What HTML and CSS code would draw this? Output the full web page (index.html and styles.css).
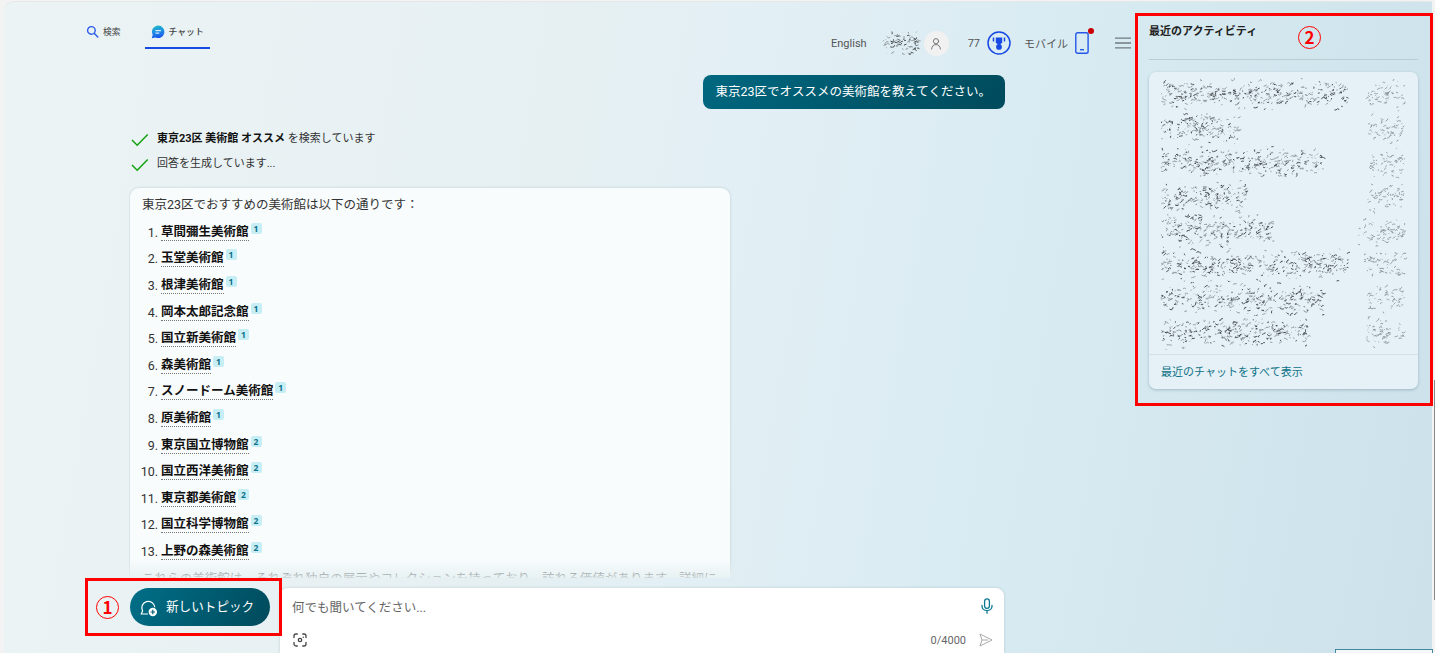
FILE: index.html
```
<!DOCTYPE html>
<html lang="ja">
<head>
    <meta charset="UTF-8">
    <meta name="viewport" content="width=device-width, initial-scale=1.0">
    <title>チャット</title>
    <link rel="stylesheet" href="styles.css">
</head>
<body>
    <div class="page">
        <div class="main">
            <header class="header">
                <nav class="tabs">
                    <a class="tab">
                        <svg width="13" height="13" viewBox="0 0 13 13" fill="none" stroke="#2a5be8" stroke-width="1.4" stroke-linecap="round"><circle cx="5.4" cy="5.4" r="3.8"/><path d="M8.4 8.4l3.4 3.6"/></svg>
                        検索
                    </a>
                    <a class="tab active">
                        <svg width="14" height="14" viewBox="0 0 14 14">
                            <defs><linearGradient id="bubble" x1="0.4" y1="0" x2="0.6" y2="1"><stop offset="0" stop-color="#22b8c6"/><stop offset="0.5" stop-color="#1b8be6"/><stop offset="1" stop-color="#1c4fee"/></linearGradient></defs>
                            <path d="M7.2.6a6.2 6.2 0 1 1-2.7 11.8L.8 13.2l.9-3.5A6.2 6.2 0 0 1 7.2.6z" fill="url(#bubble)"/>
                            <path d="M4.8 5.7h4.8M4.8 8.1h3.1" stroke="#fff" stroke-width="1" stroke-linecap="round"/>
                        </svg>
                        チャット
                    </a>
                </nav>
                <div class="tools">
                    <span class="lang">English</span>
                    <svg class="scribble user-name" width="43" height="24" data-spans="0-42" data-seed="5"></svg>
                    <span class="avatar">
                        <svg width="12" height="13" viewBox="0 0 12 13" fill="none" stroke="#777" stroke-width="1" stroke-linecap="round"><circle cx="6" cy="4.2" r="2.6"/><path d="M1.600 12c.2-2.800 1.900-4.400 4.400-4.400s4.200 1.600 4.400 4.400"/></svg>
                    </span>
                    <span class="points">77</span>
                    <svg class="medal" width="24" height="24" viewBox="0 0 24 24"><circle cx="12" cy="12" r="11" fill="none" stroke="#174ae4" stroke-width="1.5"/><path d="M8.800 6.400h6.400v5.100l-2 1.900h-2.400l-2-1.900z" fill="#174ae4"/><circle cx="12" cy="15.900" r="2.900" fill="#174ae4"/><path d="M6.500 6.600v3.800M17.500 6.600v3.800" stroke="#174ae4" stroke-width="1.500"/></svg>
                    <span class="mobile">モバイル</span>
                    <span class="phone">
                        <svg width="14" height="22" viewBox="0 0 14 22" fill="none" stroke="#2457ea" stroke-width="1.400"><rect x=".8" y=".8" width="12.300" height="20.400" rx="1.800"/><path d="M5 17.700h4"/></svg>
                        <i class="dot"></i>
                    </span>
                    <svg class="menu" width="16" height="12" viewBox="0 0 16 12" stroke="#707b80" stroke-width="1.300"><path d="M0 1.200h16M0 6h16M0 10.900h16"/></svg>
                </div>
            </header>

            <div class="chat">
                <div class="question">東京23区でオススメの美術館を教えてください。</div>
                <div class="status">
                    <svg width="18" height="14" viewBox="0 0 18 14" fill="none" stroke="#13a10e" stroke-width="1.500"><path d="M1 7l5.200 5.200L16.700 1.500"/></svg>
                    <span><b>東京23区 美術館 オススメ</b> を検索しています</span>
                </div>
                <div class="status">
                    <svg width="18" height="14" viewBox="0 0 18 14" fill="none" stroke="#13a10e" stroke-width="1.500"><path d="M1 7l5.200 5.200L16.700 1.500"/></svg>
                    <span>回答を生成しています...</span>
                </div>
                <div class="answer">
                    <p class="lead">東京23区でおすすめの美術館は以下の通りです：</p>
                    <ol>
                        <li><b>草間彌生美術館</b><sup>1</sup></li>
                        <li><b>玉堂美術館</b><sup>1</sup></li>
                        <li><b>根津美術館</b><sup>1</sup></li>
                        <li><b>岡本太郎記念館</b><sup>1</sup></li>
                        <li><b>国立新美術館</b><sup>1</sup></li>
                        <li><b>森美術館</b><sup>1</sup></li>
                        <li><b>スノードーム美術館</b><sup>1</sup></li>
                        <li><b>原美術館</b><sup>1</sup></li>
                        <li><b>東京国立博物館</b><sup>2</sup></li>
                        <li><b>国立西洋美術館</b><sup>2</sup></li>
                        <li><b>東京都美術館</b><sup>2</sup></li>
                        <li><b>国立科学博物館</b><sup>2</sup></li>
                        <li><b>上野の森美術館</b><sup>2</sup></li>
                    </ol>
                    <p class="more">これらの美術館は、それぞれ独自の展示やコレクションを持っており、訪れる価値があります。詳細に</p>
                </div>
            </div>

            <div class="compose">
                <button class="new-topic">
                    <svg width="18" height="18" viewBox="0 0 18 18"><path d="M8 15H1.200l1.400-3.100A6.500 6.500 0 1 1 14.800 8.200" fill="none" stroke="#fff" stroke-width="1.200" stroke-linejoin="round"/><circle cx="12.800" cy="13" r="4.200" fill="#fff"/><path d="M12.800 10.800v4.400M10.600 13h4.400" stroke="#005f74" stroke-width="1.200"/></svg>
                    新しいトピック
                </button>
                <div class="input-box">
                    <div class="input-row">
                        <span class="placeholder">何でも聞いてください...</span>
                        <svg width="12" height="16" viewBox="0 0 12 16" fill="none" stroke="#0c7a94" stroke-width="1.300" stroke-linecap="round"><rect x="3.600" y=".8" width="4.800" height="9.600" rx="2.400"/><path d="M1 7.500v.8a5 4.300 0 0 0 10 0v-.8M6 12.800v2.400"/></svg>
                    </div>
                    <div class="input-row bottom">
                        <svg width="14" height="14" viewBox="0 0 14 14" fill="none" stroke="#444" stroke-width="1.300" stroke-linecap="round"><path d="M1 4.500V3a2 2 0 0 1 2-2h1.300M9.700 1H11a2 2 0 0 1 2 2v1.500M13 9.500V11a2 2 0 0 1-2 2H9.700M4.300 13H3a2 2 0 0 1-2-2V9.500"/><circle cx="7" cy="7" r="1.700"/><path d="M10.300 4.200v.1"/></svg>
                        <span class="count">0/4000</span>
                        <svg width="14" height="14" viewBox="0 0 14 14" fill="none" stroke="#aaa" stroke-width="1" stroke-linejoin="round"><path d="M1 1l12 6L1 13l2-6zM3 7h6"/></svg>
                    </div>
                </div>
            </div>
        </div>

        <aside class="activity">
            <h2>最近のアクティビティ</h2>
            <div class="card">
                <div class="history">
                    <svg class="scribble" width="250" height="34" data-spans="0-192 204-249" data-seed="11"></svg>
                    <svg class="scribble" width="250" height="34" data-spans="0-85 207-249" data-seed="22"></svg>
                    <svg class="scribble" width="250" height="34" data-spans="0-168 206-249" data-seed="33"></svg>
                    <svg class="scribble" width="250" height="34" data-spans="0-91 207-249" data-seed="44"></svg>
                    <svg class="scribble" width="250" height="34" data-spans="0-118 197-249" data-seed="55"></svg>
                    <svg class="scribble" width="250" height="34" data-spans="0-195 203-249" data-seed="66"></svg>
                    <svg class="scribble" width="250" height="34" data-spans="0-168 206-249" data-seed="77"></svg>
                    <svg class="scribble" width="250" height="34" data-spans="0-154 205-249" data-seed="88"></svg>
                </div>
                <a class="show-all">最近のチャットをすべて表示</a>
            </div>
        </aside>
    </div>

    <div class="scrollbar"></div>
    <div class="corner-box"></div>

    <!-- callouts -->
    <div class="callout callout-topic"><span class="num">1</span></div>
    <div class="callout callout-activity"><span class="num">2</span></div>

    <script src="script.js"></script>
</body>
</html>
```
FILE: styles.css
```
* {
    margin: 0;
    padding: 0;
    box-sizing: border-box;
}

body {
    position: relative;
    height: 653px;
    overflow: hidden;
    padding: 1px 3px 0 4px;
    background: #f3f3f3;
    font-family: Roboto, "Noto Sans CJK JP", sans-serif;
    font-size: 12.5px;
    color: #333;
}

svg {
    display: block;
    flex: none;
}

.page {
    display: grid;
    grid-template-columns: 1131px 1fr;
    height: 652px;
    border-top: 1px solid #e4e8e9;
    border-radius: 10px 0 0 0;
    background: linear-gradient(100deg, #ebf3f5 0%, #e7f0f2 32%, #e2eff4 50%, #d8ebf2 70%, #cce1ea 100%);
}

.main {
    display: flex;
    flex-direction: column;
    height: 651px;
    min-width: 0;
}

/* header */
.header {
    display: flex;
    flex: none;
    justify-content: space-between;
    height: 73px;
    padding: 14px 4px 0 82px;
}

.tabs {
    display: flex;
    gap: 24px;
    height: 33px;
}

.tab {
    display: flex;
    align-items: center;
    gap: 4px;
    padding-bottom: 2px;
    font-size: 8.8px;
    color: #444;
}

.tab.active {
    width: 65px;
    padding: 0 0 0 6px;
    border-bottom: 2px solid #174ae4;
    font-weight: 500;
}

.tools {
    display: flex;
    align-items: center;
    height: 54px;
    font-size: 11px;
    color: #555;
}

.user-name {
    margin-left: 13px;
}

.avatar {
    display: flex;
    align-items: center;
    justify-content: center;
    width: 25px;
    height: 25px;
    margin-left: 1px;
    border-radius: 50%;
    background: #f1f1f1;
}

.points {
    margin-left: 19px;
}

.medal {
    margin: 0 13px 0 7px;
}

.phone {
    position: relative;
    margin-left: 7px;
}

.dot {
    position: absolute;
    top: -4px;
    right: -5px;
    width: 6px;
    height: 6px;
    border-radius: 50%;
    background: #c80000;
}

.menu {
    margin-left: 26px;
}

/* conversation */
.chat {
    display: flex;
    flex: none;
    flex-direction: column;
    width: 876px;
    height: 503px;
    margin-left: 125px;
    padding-left: 1px;
    overflow: hidden;
}

.question {
    flex: none;
    align-self: flex-end;
    height: 34px;
    margin-bottom: 18px;
    padding: 0 14px 0 12px;
    border-radius: 8px;
    background: linear-gradient(135deg, #006880, #004a5b);
    line-height: 33px;
    color: #fff;
}

.status {
    display: flex;
    flex: none;
    align-items: center;
    gap: 8px;
    height: 25px;
    padding-left: 1px;
    font-size: 11px;
    line-height: 20px;
}

.status span {
    margin-top: -2px;
}

.status b {
    color: #111;
}

.answer {
    position: relative;
    flex: none;
    width: 600px;
    height: 420px;
    margin-top: 11px;
    padding: 3px 12px;
    border-radius: 9px;
    background: #f9fcfc;
    box-shadow: 0 0 3px rgba(0, 50, 70, 0.18);
}

/* fades the answer out above the compose bar */
.answer::after {
    content: "";
    position: absolute;
    top: 371px;
    left: -1px;
    right: -2px;
    height: 20px;
    background: linear-gradient(rgba(229, 240, 242, 0), rgba(229, 240, 242, 0.92));
}

.lead {
    height: 28px;
    line-height: 27px;
}

.answer ol {
    list-style: none;
    counter-reset: item;
}

.answer li {
    display: flex;
    align-items: center;
    height: 26.6px;
    counter-increment: item;
}

.answer li::before {
    content: counter(item) ".";
    width: 16px;
    margin-right: 3px;
    display: flex;
    justify-content: flex-end;
}

.answer li b {
    height: 17px;
    border-bottom: 1px dotted #777;
    line-height: 16px;
    color: #111;
}

.answer sup {
    width: 11px;
    height: 11px;
    margin: -8px 0 0 2px;
    border-radius: 2px;
    background: #c7edf5;
    font-family: "Open Sans", sans-serif;
    font-size: 8.5px;
    font-weight: 700;
    line-height: 11px;
    text-align: center;
    color: #0b718a;
}

.more {
    margin-top: 4px;
    line-height: 20px;
    white-space: nowrap;
    letter-spacing: 0.05px;
}

/* compose bar */
.compose {
    display: flex;
    flex: 1;
    min-height: 0;
    gap: 10px;
    padding: 10px 0 0 126px;
}

.new-topic {
    display: flex;
    align-items: center;
    gap: 8px;
    width: 140px;
    height: 38px;
    padding: 0 0 3px 10px;
    border: none;
    border-radius: 19px;
    background: linear-gradient(120deg, #006f88, #004a5b);
    font: inherit;
    font-size: 12.6px;
    white-space: nowrap;
    color: #fff;
}

.new-topic svg {
    margin-top: 4px;
}

.input-box {
    width: 724px;
    height: 72px;
    padding: 9px 11px 0 12px;
    border-radius: 8px;
    background: #fff;
    box-shadow: 0 0 3px rgba(0, 50, 70, 0.18);
    color: #666;
}

.input-row {
    display: flex;
    align-items: center;
    justify-content: space-between;
    height: 18px;
}

.input-row.bottom {
    margin-top: 16px;
    padding-left: 1px;
}

.count {
    margin-left: auto;
    margin-right: 13px;
    font-size: 11px;
}

/* recent activity */
.activity {
    min-width: 0;
    padding: 21px 14px 0;
}

.activity h2 {
    height: 37px;
    border-bottom: 1px solid #b9cdd5;
    font-size: 11px;
    line-height: 17px;
    color: #222;
}

.card {
    height: 317px;
    margin-top: 12px;
    border-radius: 7px;
    background: #e5f1f6;
    box-shadow: 0 1px 3px rgba(0, 50, 70, 0.25);
}

.history {
    height: 283px;
    padding: 6px 10px 0;
    border-bottom: 1px solid #d3e1e7;
}

.show-all {
    display: block;
    padding-left: 12px;
    font-size: 11px;
    line-height: 35px;
    color: #0f7188;
}

/* window edge */
.scrollbar {
    position: absolute;
    top: 380px;
    right: 0;
    width: 1px;
    height: 220px;
    background: #888;
}

.corner-box {
    position: absolute;
    top: 649px;
    left: 1335px;
    width: 98px;
    height: 10px;
    border: 1px solid #43889b;
    background: #f4f8fa;
}

/* callouts */
.callout {
    position: absolute;
    border: 3px solid #f00;
}

.callout-topic {
    top: 578px;
    left: 85px;
    width: 197px;
    height: 58px;
    padding: 15px 0 0 8px;
}

.callout-activity {
    top: 13px;
    left: 1135px;
    width: 298px;
    height: 393px;
    padding: 10px 0 0 160px;
}

.num {
    display: block;
    width: 23px;
    height: 23px;
    border: 1px solid #f00;
    border-radius: 50%;
    font-family: "Noto Sans CJK JP", sans-serif;
    font-size: 17px;
    font-weight: 700;
    line-height: 20px;
    text-align: center;
    color: #f00;
}
```
FILE: script.js
```
// Scribbles over private names and dates
function makeRandom(seed) {
    return function () {
        seed = (seed * 16807) % 2147483647;
        return seed / 2147483647;
    };
}

function drawScribble(svg) {
    const rand = makeRandom(Number(svg.dataset.seed) * 7919);
    const mid = svg.getAttribute('height') / 2;
    let dark = '';
    let light = '';

    svg.dataset.spans.split(' ').forEach(function (span, index) {
        const [from, to] = span.split('-').map(Number);
        const count = (to - from) * (index ? 1.3 : 1.9);
        for (let i = 0; i < count; i++) {
            const x = from + 2 + rand() * (to - from - 6);
            const spread = rand() > 0.85 ? 20 : 12;
            const y = mid + (rand() + rand() + rand() - 1.5) * spread;
            // short wavy stroke, mostly leaning to the upper right
            let mark = `M${x.toFixed(1)} ${y.toFixed(1)}`;
            const steps = 1 + Math.floor(rand() * 3);
            for (let s = 0; s < steps; s++) {
                mark += `l${(rand() * 2.6 - 0.5).toFixed(1)} ${(rand() * 2.6 - 1.5).toFixed(1)}`;
            }
            if (index === 0 && rand() > 0.6) {
                dark += mark;
            } else {
                light += mark;
            }
        }
    });

    svg.innerHTML = `<path d="${light}" fill="none" stroke="#858e92" stroke-width="0.8"/><path d="${dark}" fill="none" stroke="#3c4245" stroke-width="0.9"/>`;
}

document.querySelectorAll('.scribble').forEach(drawScribble);
```
